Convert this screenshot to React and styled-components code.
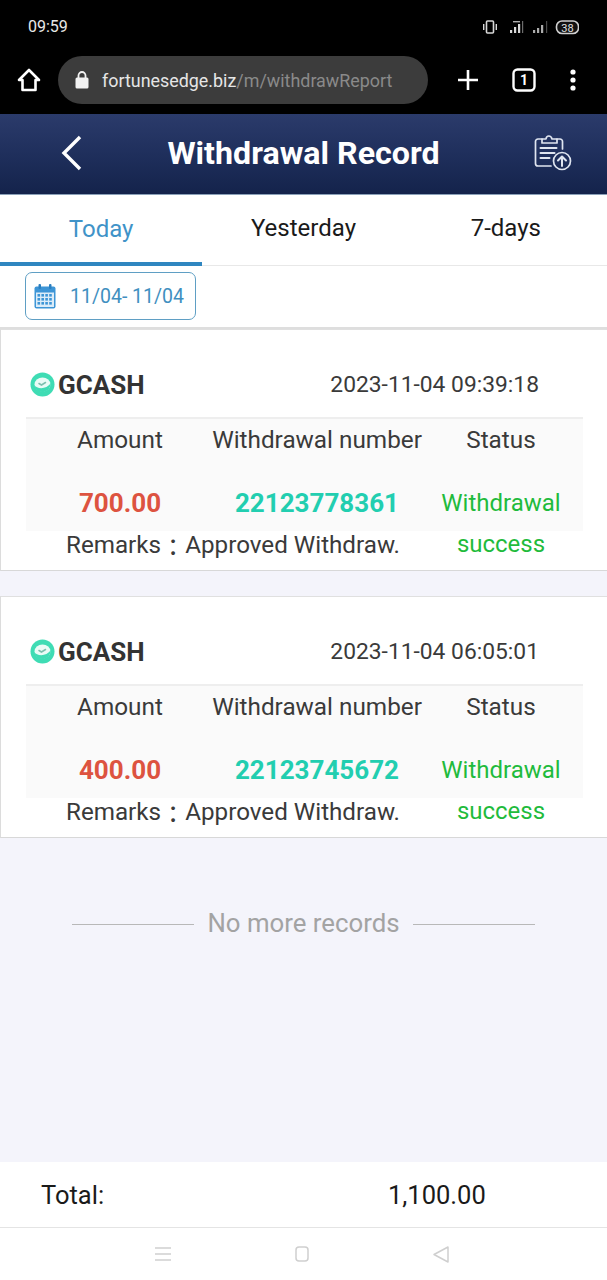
import React from 'react';
import styled, { createGlobalStyle } from 'styled-components';

const GlobalStyle = createGlobalStyle`
  html, body {
    margin: 0;
    padding: 0;
    background: #f4f4fb;
  }
  * {
    box-sizing: border-box;
  }
`;

const Page = styled.div`
  width: 607px;
  height: 1280px;
  display: flex;
  flex-direction: column;
  overflow: hidden;
  font-family: Roboto, 'Liberation Sans', sans-serif;
  background: #f4f4fb;
`;

const StatusBar = styled.div`
  height: 54px;
  flex: none;
  background: #000;
  display: flex;
  align-items: center;
  justify-content: space-between;
  padding: 0 28px 1px 28px;
  color: #e8e8e8;
  font-size: 16px;
`;

const BrowserBar = styled.div`
  height: 60px;
  flex: none;
  background: #000;
  display: flex;
  align-items: center;
  padding: 0 0 8px 16px;
`;

const AddressPill = styled.div`
  width: 370px;
  height: 48px;
  margin-left: 16px;
  border-radius: 24px;
  background: #3c3c3c;
  display: flex;
  align-items: center;
  padding-left: 17px;
  font-size: 17.9px;
  white-space: nowrap;
  color: #e6e6e6;
  span {
    color: #8a8a8a;
  }
  svg {
    margin-right: 13px;
  }
`;

const BrowserActions = styled.div`
  display: flex;
  align-items: center;
  margin-left: 29px;
  gap: 33px;
`;

const Header = styled.header`
  height: 81px;
  flex: none;
  background: linear-gradient(180deg, #2b3b6b 0%, #1f2f5c 50%, #14234b 100%);
  border-bottom: 1px solid #8aa0b8;
  display: grid;
  grid-template-columns: 1fr auto 1fr;
  align-items: center;
  padding: 0 35px 2px;
`;

const HeaderAction = styled.div`
  display: flex;
  justify-content: ${(p) => (p.$end ? 'flex-end' : 'flex-start')};
  padding-left: ${(p) => (p.$end ? '0' : '24px')};
`;

const Title = styled.h1`
  margin: 0;
  font-size: 32.2px;
  font-weight: 700;
  color: #fff;
`;

const Tabs = styled.nav`
  height: 71px;
  flex: none;
  background: #fff;
  display: grid;
  grid-template-columns: repeat(3, 1fr);
  border-bottom: 1px solid #e8e8e8;
`;

const Tab = styled.div`
  display: flex;
  align-items: center;
  justify-content: center;
  padding-bottom: ${(p) => (p.$active ? '0' : '4px')};
  font-size: 24px;
  color: ${(p) => (p.$active ? '#3f93c8' : '#1a1a1a')};
  border-bottom: ${(p) => (p.$active ? '4px solid #2f86c0' : '0')};
  margin-bottom: ${(p) => (p.$active ? '-1px' : '0')};
`;

const DateRow = styled.div`
  height: 63px;
  flex: none;
  background: #fff;
  padding: 6px 0 0 25px;
  border-bottom: 2px solid #dedede;
`;

const DatePill = styled.div`
  width: 171px;
  height: 48px;
  border: 1px solid #5f9fc4;
  border-radius: 7px;
  display: flex;
  align-items: center;
  gap: 14px;
  padding-left: 8px;
  font-size: 19.5px;
  color: #3f8fc0;
  white-space: nowrap;
`;

const Card = styled.section`
  height: 242px;
  flex: none;
  background: #fff;
  border-top: 1px solid #e0e0e0;
  border-bottom: 1px solid #d8d8d8;
  border-left: 1px solid #dcdcdc;
  padding: 0 24px 0 25px;
  margin-bottom: ${(p) => (p.$last ? '0' : '25px')};
`;

const CardHead = styled.div`
  height: 89px;
  display: flex;
  align-items: center;
  justify-content: space-between;
  padding: 22px 44px 0 4px;
  border-bottom: 2px solid #eeeeee;
`;

const Brand = styled.div`
  display: flex;
  align-items: center;
  gap: 3px;
  font-size: 26px;
  font-weight: 700;
  color: #333;
`;

const Stamp = styled.div`
  font-size: 22.8px;
  color: #3a3a3a;
`;

const Band = styled.div`
  height: 112px;
  background: #fafafa;
  display: grid;
  grid-template-columns: 188px 206px 162px;
  grid-template-rows: 40px 72px;
`;

const Label = styled.div`
  display: flex;
  align-items: center;
  justify-content: center;
  font-size: 24.3px;
  color: #3a3a3a;
  white-space: nowrap;
`;

const Value = styled.div`
  display: flex;
  align-items: flex-end;
  justify-content: center;
  padding-bottom: 13px;
  font-size: 26px;
  font-weight: 700;
  color: ${(p) => p.$color};
`;

const StatusValue = styled.div`
  height: 72px;
  padding: 24px 20px 0;
  text-align: center;
  font-size: 24px;
  line-height: 41px;
  color: #1fbb3c;
`;

const Remarks = styled.div`
  width: 414px;
  height: 28px;
  display: flex;
  align-items: center;
  justify-content: center;
  font-size: 24.2px;
  color: #3a3a3a;
  white-space: nowrap;
`;

const Colon = styled.span`
  font-family: 'Noto Sans CJK TC', sans-serif;
`;

const Filler = styled.div`
  flex: 1;
  background: #f4f4fb;
  padding: 70px 72px 0;
`;

const NoMore = styled.div`
  display: flex;
  align-items: center;
  gap: 13px;
  font-size: 25.8px;
  color: #a3a3a3;
  white-space: nowrap;
  &:before,
  &:after {
    content: '';
    flex: 1;
    height: 1px;
    background: #b8b8b8;
    margin-top: 3px;
  }
`;

const Footer = styled.footer`
  height: 66px;
  flex: none;
  background: #fff;
  border-bottom: 1px solid #e4e4e4;
  display: grid;
  grid-template-columns: 347px 1fr;
  align-items: center;
  padding-left: 41px;
  font-size: 25.5px;
  color: #1a1a1a;
`;

const NavBar = styled.div`
  height: 52px;
  flex: none;
  background: #fff;
  display: grid;
  grid-template-columns: repeat(3, 139px);
  justify-content: center;
  align-items: center;
  justify-items: center;
  padding-right: 3px;
`;

function HomeIcon() {
  return (
    <svg width="26" height="26" viewBox="0 0 26 26" fill="none" stroke="#fff" strokeWidth="2.6" strokeLinejoin="round">
      <path d="M3 13 13 3l10 10h-3.5v10h-13V13z" />
    </svg>
  );
}

function LockIcon() {
  return (
    <svg width="14" height="18" viewBox="0 0 14 18">
      <rect x="0.5" y="6.5" width="13" height="11" rx="1.5" fill="#f2f2f2" />
      <path d="M3.5 7V4.5a3.5 3.5 0 0 1 7 0V7" fill="none" stroke="#f2f2f2" strokeWidth="1.8" />
    </svg>
  );
}

function PlusIcon() {
  return (
    <svg width="22" height="22" viewBox="0 0 22 22" stroke="#fff" strokeWidth="2.6">
      <path d="M11 1v20M1 11h20" />
    </svg>
  );
}

function TabCountIcon() {
  return (
    <svg width="24" height="24" viewBox="0 0 24 24">
      <rect x="1.5" y="1.5" width="21" height="21" rx="4" fill="none" stroke="#fff" strokeWidth="2.4" />
      <text x="12" y="17" textAnchor="middle" fontSize="14" fontWeight="700" fontFamily="Roboto, sans-serif" fill="#fff">
        1
      </text>
    </svg>
  );
}

function DotsIcon() {
  return (
    <svg width="8" height="22" viewBox="0 0 8 22" fill="#fff">
      <circle cx="4" cy="3" r="2.6" />
      <circle cx="4" cy="11" r="2.6" />
      <circle cx="4" cy="19" r="2.6" />
    </svg>
  );
}

function DeviceStatus() {
  return (
    <svg width="96" height="16" viewBox="0 0 96 16" fill="#d8d8d8">
      <rect x="3.5" y="2" width="7" height="12" rx="1" fill="none" stroke="#d8d8d8" strokeWidth="1.6" />
      <path d="M0 5h1.4v6H0zM12.6 5H14v6h-1.4z" />
      <path d="M27 11h2.2v3H27zM31 8h2.2v6H31zM35 5h2.2v9H35z" />
      <path d="M30 2h7v1.4h-7z" opacity="0.8" />
      <path d="M39 2h1.2v12H39z" opacity="0.5" />
      <path d="M50 11h2.2v3H50zM54 9h2.2v5H54zM58 6h2.2v8H58z" opacity="0.8" />
      <path d="M63 2h1.2v12H63z" opacity="0.35" />
      <rect x="73.5" y="2" width="22" height="12.5" rx="5.5" fill="#111" stroke="#d0d0d0" strokeWidth="1.6" />
      <text x="84.5" y="12.5" textAnchor="middle" fontSize="11" fontFamily="Roboto, sans-serif" fill="#e0e0e0">
        38
      </text>
    </svg>
  );
}

function BackIcon() {
  return (
    <svg width="24" height="36" viewBox="0 0 24 36" fill="none" stroke="#fff" strokeWidth="3.4">
      <path d="M21 2 5 18l16 16" />
    </svg>
  );
}

function ReportIcon() {
  return (
    <svg width="38" height="38" viewBox="0 0 38 38" fill="none" stroke="#dfe5f0" strokeWidth="1.7" strokeLinecap="round" strokeLinejoin="round">
      <path d="M8 5H4a2.5 2.5 0 0 0-2.5 2.5v22A2.5 2.5 0 0 0 4 32h13" />
      <path d="M23 5h3a2.5 2.5 0 0 1 2.5 2.5V15" />
      <path d="M8 9V5h4c.5-4 5-4 6 0h5v4z" />
      <path d="M6.5 14h16M6.5 19h14M6.5 24h9" strokeWidth="2" />
      <circle cx="28" cy="27" r="8.5" />
      <path d="M28 32v-9M24 26.5l4-4 4 4" strokeWidth="2" />
    </svg>
  );
}

function CalendarIcon() {
  const cells = [];
  for (let row = 0; row < 3; row++) {
    for (let col = 0; col < 4; col++) {
      cells.push(<rect key={`${row}-${col}`} x={3.5 + col * 3.9} y={10 + row * 4} width="2.6" height="2.6" fill="#3d95d6" />);
    }
  }
  return (
    <svg width="22" height="25" viewBox="0 0 22 25">
      <rect x="0.5" y="2.5" width="21" height="22" rx="2" fill="#3d95d6" />
      <rect x="2" y="8.5" width="18" height="14.5" fill="#dcecf8" />
      <rect x="4.5" y="0" width="2.5" height="5" rx="1" fill="#2a7fc0" />
      <rect x="15" y="0" width="2.5" height="5" rx="1" fill="#2a7fc0" />
      {cells}
    </svg>
  );
}

function GcashIcon() {
  return (
    <svg width="25" height="25" viewBox="0 0 25 25">
      <circle cx="12.5" cy="12.5" r="12" fill="#3fdcb4" />
      <ellipse cx="12.5" cy="12.5" rx="8" ry="7" fill="#eafbf6" />
      <path d="M4 13c3 4 12 5 17-2-1 7-5 9-9 9s-7-3-8-7z" fill="#3fdcb4" />
      <path d="M9 11.5l2.5 1.5 4-2.5" fill="none" stroke="#7dbfae" strokeWidth="1.5" strokeLinecap="round" />
    </svg>
  );
}

function MenuKey() {
  return (
    <svg width="16" height="16" viewBox="0 0 16 16" stroke="#cfcfcf" strokeWidth="1.5">
      <path d="M0 2h16M0 8h16M0 14h16" />
    </svg>
  );
}

function HomeKey() {
  return (
    <svg width="14" height="16" viewBox="0 0 14 16" fill="none" stroke="#cfcfcf" strokeWidth="1.5">
      <rect x="1" y="1" width="12" height="14" rx="3" />
    </svg>
  );
}

function BackKey() {
  return (
    <svg width="16" height="17" viewBox="0 0 16 17" fill="none" stroke="#cfcfcf" strokeWidth="1.5" strokeLinejoin="round">
      <path d="M15 1v15L1 8.5z" />
    </svg>
  );
}

const records = [
  { time: '2023-11-04 09:39:18', amount: '700.00', number: '22123778361' },
  { time: '2023-11-04 06:05:01', amount: '400.00', number: '22123745672' },
];

function RecordCard({ record, last }) {
  return (
    <Card $last={last}>
      <CardHead>
        <Brand>
          <GcashIcon />
          GCASH
        </Brand>
        <Stamp>{record.time}</Stamp>
      </CardHead>
      <Band>
        <Label>Amount</Label>
        <Label>Withdrawal number</Label>
        <Label>Status</Label>
        <Value $color="#dd5340">{record.amount}</Value>
        <Value $color="#22ceb0">{record.number}</Value>
        <StatusValue>Withdrawal success</StatusValue>
      </Band>
      <Remarks>
        Remarks<Colon>：</Colon>Approved Withdraw.
      </Remarks>
    </Card>
  );
}

export default function App() {
  return (
    <Page>
      <GlobalStyle />
      <StatusBar>
        <span>09:59</span>
        <DeviceStatus />
      </StatusBar>
      <BrowserBar>
        <HomeIcon />
        <AddressPill>
          <LockIcon />
          fortunesedge.biz<span>/m/withdrawReport</span>
        </AddressPill>
        <BrowserActions>
          <PlusIcon />
          <TabCountIcon />
          <DotsIcon />
        </BrowserActions>
      </BrowserBar>
      <Header>
        <HeaderAction>
          <BackIcon />
        </HeaderAction>
        <Title>Withdrawal Record</Title>
        <HeaderAction $end>
          <ReportIcon />
        </HeaderAction>
      </Header>
      <Tabs>
        <Tab $active>Today</Tab>
        <Tab>Yesterday</Tab>
        <Tab>7-days</Tab>
      </Tabs>
      <DateRow>
        <DatePill>
          <CalendarIcon />
          11/04- 11/04
        </DatePill>
      </DateRow>
      {records.map((record, i) => (
        <RecordCard key={record.number} record={record} last={i === records.length - 1} />
      ))}
      <Filler>
        <NoMore>No more records</NoMore>
      </Filler>
      <Footer>
        <span>Total:</span>
        <span>1,100.00</span>
      </Footer>
      <NavBar>
        <MenuKey />
        <HomeKey />
        <BackKey />
      </NavBar>
    </Page>
  );
}
